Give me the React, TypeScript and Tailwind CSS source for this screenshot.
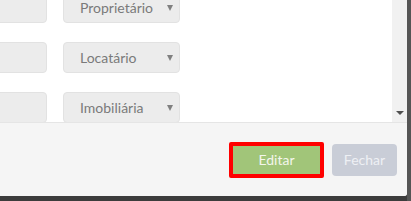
import React from "react";

function Row({ label }: { label: string }) {
  return (
    <div className="flex h-[31px] items-stretch gap-[16px]">
      <div className="ml-[-60px] w-[107px] rounded-[4px] border border-[#e2e2e2] bg-[#ececec]" />
      <div className="relative flex w-[117px] items-center rounded-[4px] border border-[#e2e2e2] bg-[#ececec] pl-[16px] text-[14px] text-[#7a7a7a]">
        <span>{label}</span>
        <span className="absolute right-[6px] top-1/2 -translate-y-1/2 h-0 w-0 border-x-[3px] border-t-[6px] border-x-transparent border-t-[#808080]" />
      </div>
    </div>
  );
}

export default function App() {
  return (
    <div
      className="relative h-[201px] w-[411px] overflow-hidden bg-[#3c3c3c]"
      style={{ fontFamily: "Lato, 'Open Sans', sans-serif" }}
    >
      <div className="flex h-[196px] w-[407px] flex-col overflow-hidden rounded-br-[3px] bg-white">
        <div className="flex h-[122px] shrink-0">
          <div className="flex-1 overflow-hidden">
            <div className="mt-[-8px] flex flex-col gap-[19px]">
              <Row label="Proprietário" />
              <Row label="Locatário" />
              <Row label="Imobiliária" />
            </div>
          </div>
          <div className="flex w-[15px] flex-col justify-end bg-[#f1f1f1] pb-[7px]">
            <span className="mx-auto h-0 w-0 border-x-[4px] border-t-[4px] border-x-transparent border-t-[#505050]" />
          </div>
        </div>
        <div className="flex flex-1 items-center justify-end gap-[8px] border-t border-[#e5e5e5] bg-[#f5f5f5] pr-[10px]">
          <button className="h-[36px] w-[95px] rounded-[2px] border-[4px] border-[#ff0000] bg-[#a1c579] text-[14px] text-[#f4f6ec]">
            Editar
          </button>
          <button className="h-[32px] w-[65px] rounded-[4px] bg-[#c9cdd7] text-[14px] text-[#eef0f4]">
            Fechar
          </button>
        </div>
      </div>
      <div className="absolute right-0 top-0 h-full w-[4px] bg-[#555]" />
    </div>
  );
}
